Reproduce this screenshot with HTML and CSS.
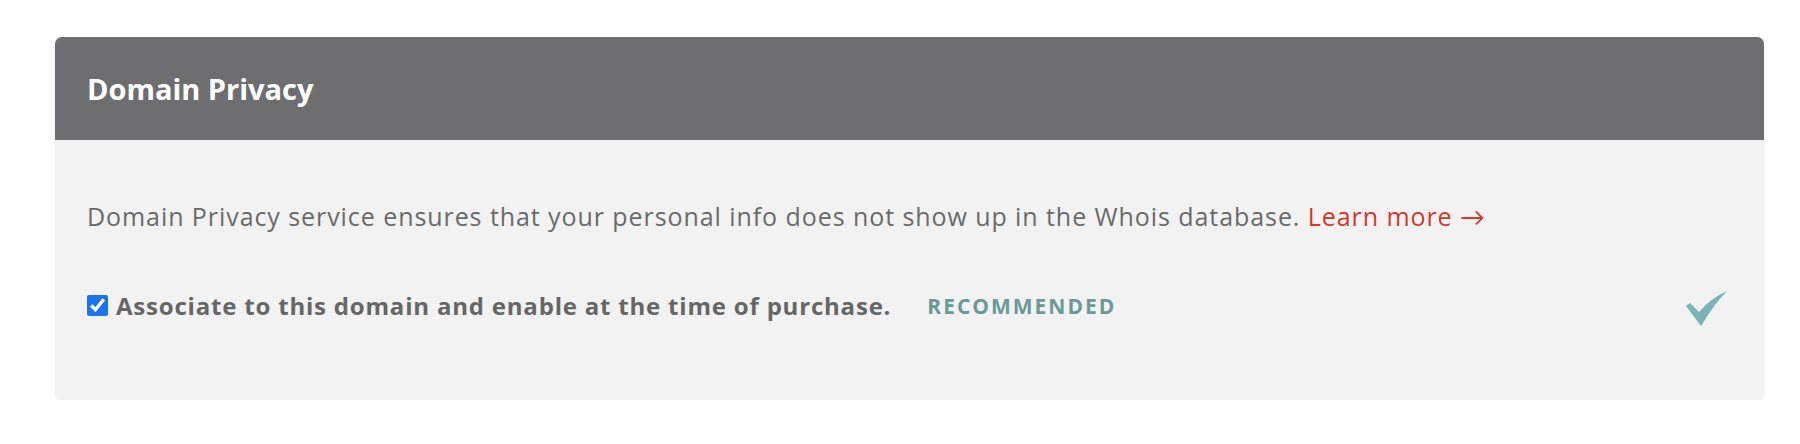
FILE: index.html
```html
<!DOCTYPE html>
<html lang="en">
<head>
    <meta charset="UTF-8">
    <title>Domain Privacy</title>
    <link rel="stylesheet" href="styles.css">
</head>
<body>

<div class="panel">
    <div class="panel-head">
        <h2>Domain Privacy</h2>
    </div>
    <div class="panel-body">
        <p class="desc">Domain Privacy service ensures that your personal info does not show up in the Whois database. <a href="#" class="learn">Learn more &rarr;</a></p>
        <div class="option">
            <label class="assoc">
                <input type="checkbox" checked>
                <span>Associate to this domain and enable at the time of purchase.</span>
            </label>
            <span class="tag">RECOMMENDED</span>
            <svg class="tick" width="42" height="36" viewBox="0 0 42 36">
                <path d="M0 15 L4 12 L13 21 Q25 7 41 0 Q29 12 15 35 Z" fill="#7ab4b6"/>
            </svg>
        </div>
    </div>
</div>

</body>
</html>
```

FILE: styles.css
```css
body {
    margin: 0;
    background: #fff;
    font-family: "Open Sans", Lato, sans-serif;
}

.panel {
    margin: 37px 36px 0 55px;
    border-radius: 7px;
    overflow: hidden;
    background: #f2f2f2;
    box-shadow: 0 1px 3px rgba(0, 0, 0, 0.06);
}

.panel-head {
    background: #6e6e71;
    height: 103px;
    display: flex;
    align-items: center;
    padding: 0 32px;
}

.panel-head h2 {
    margin: 0;
    color: #fff;
    font-size: 29px;
    font-weight: 700;
}

.panel-body {
    height: 260px;
    padding: 0 36px 0 32px;
}

.desc {
    margin: 0;
    padding-top: 62px;
    font-size: 25px;
    font-weight: 400;
    letter-spacing: 0.93px;
    color: #6a6a6a;
    line-height: 28px;
}

.learn {
    color: #d4382c;
    text-decoration: none;
}

.option {
    display: flex;
    align-items: center;
    margin-top: 59px;
}

.assoc {
    display: flex;
    align-items: center;
    gap: 8px;
    font-size: 24px;
    font-weight: 700;
    letter-spacing: 0.8px;
    color: #666;
}

.assoc input {
    width: 21px;
    height: 21px;
    margin: 0;
    accent-color: #1a73f0;
}

.tag {
    margin-left: 36px;
    font-size: 21px;
    font-weight: 700;
    letter-spacing: 2px;
    color: #6a9a97;
}

.tick {
    margin: 0 0 -7px auto;
}
```
